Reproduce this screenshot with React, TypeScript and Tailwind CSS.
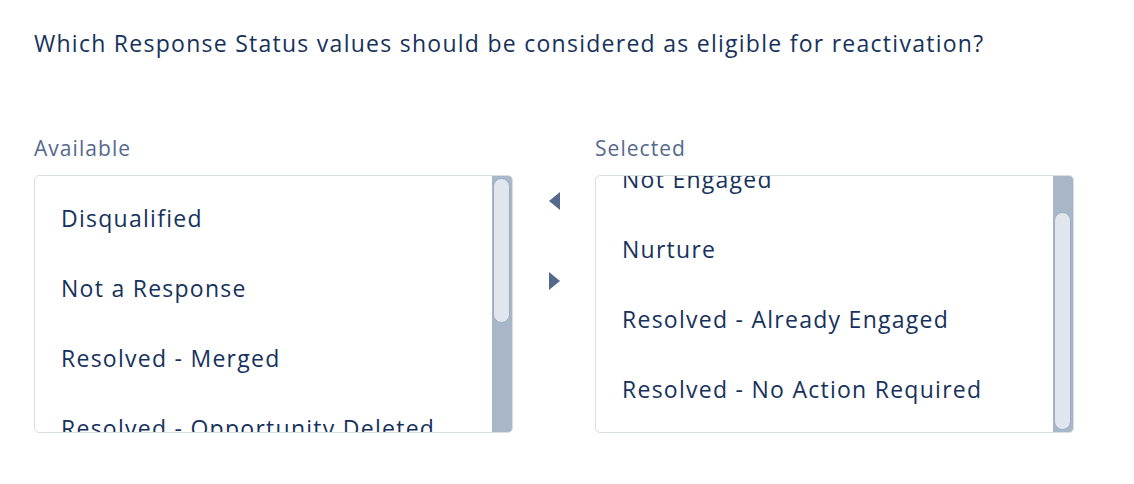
const available = ["Disqualified", "Not a Response", "Resolved - Merged", "Resolved - Opportunity Deleted"];
const selected = ["Not Engaged", "Nurture", "Resolved - Already Engaged", "Resolved - No Action Required"];

function ListBox({
  label,
  items,
  listOffset,
  thumbTop,
  thumbHeight,
}: {
  label: string;
  items: string[];
  listOffset: string;
  thumbTop: string;
  thumbHeight: string;
}) {
  return (
    <div className="flex w-[479px] flex-col">
      <div className="text-[21px] leading-[28px] tracking-[0.05em] text-[#54698d]">{label}</div>
      <div className="mt-[13px] flex h-[258px] overflow-hidden rounded-[5px] border border-[#d8dde6] bg-white">
        <div className="min-w-0 flex-1 overflow-hidden">
          <ul className={listOffset}>
            {items.map((item) => (
              <li
                key={item}
                className="h-[70px] whitespace-nowrap pl-[26px] text-[23px] leading-[70px] tracking-[0.055em] text-[#16325c]"
              >
                {item}
              </li>
            ))}
          </ul>
        </div>
        <div className="w-[20px] shrink-0 bg-[#a8b7c7]">
          <div
            className={`ml-[1px] w-[17px] rounded-full border border-[#9aabbf] bg-[#e0e5ee] ${thumbTop} ${thumbHeight}`}
          />
        </div>
      </div>
    </div>
  );
}

function Arrow({ dir }: { dir: "left" | "right" }) {
  return (
    <svg width="11" height="18" viewBox="0 0 11 18" className="fill-[#54698d]">
      {dir === "left" ? <polygon points="11,0 11,18 0,9" /> : <polygon points="0,0 0,18 11,9" />}
    </svg>
  );
}

export default function App() {
  return (
    <div
      className="h-[484px] w-[1134px] bg-white pl-[34px] pt-[26px]"
      style={{ fontFamily: '"Open Sans", "Noto Sans", sans-serif' }}
    >
      <p className="text-[23px] leading-[34px] tracking-[0.055em] text-[#16325c]">
        Which Response Status values should be considered as eligible for reactivation?
      </p>

      <div className="mt-[74px] flex">
        <ListBox
          label="Available"
          items={available}
          listOffset="pt-[7px]"
          thumbTop="mt-[2px]"
          thumbHeight="h-[145px]"
        />

        <div className="flex w-[82px] shrink-0 flex-col items-center gap-[62px] pt-[58px]">
          <button type="button" aria-label="Move to Available">
            <Arrow dir="left" />
          </button>
          <button type="button" aria-label="Move to Selected">
            <Arrow dir="right" />
          </button>
        </div>

        <ListBox
          label="Selected"
          items={selected}
          listOffset="-mt-[32px]"
          thumbTop="mt-[36px]"
          thumbHeight="h-[218px]"
        />
      </div>
    </div>
  );
}
